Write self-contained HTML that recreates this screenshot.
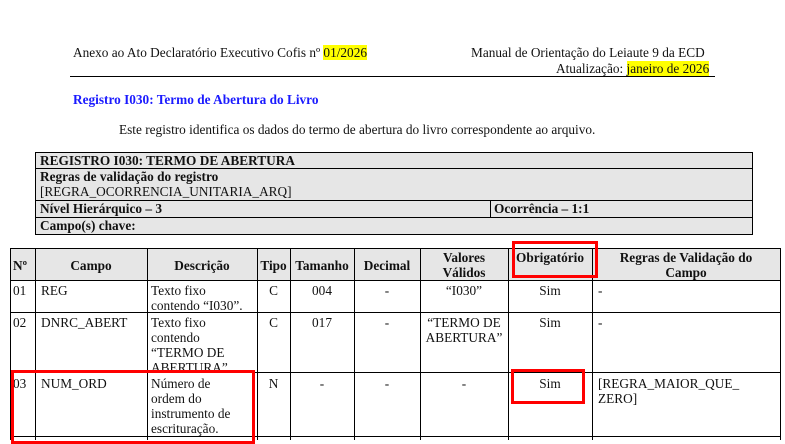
<!DOCTYPE html>
<html><head><meta charset="utf-8"><style>
body{margin:0;width:785px;height:440px;overflow:hidden;background:#fff;font-family:"Liberation Serif",serif;font-size:13.3px;color:#111;position:relative}
.a{position:absolute;white-space:nowrap;line-height:15px}
.h{background:#ffff00}
.l{position:absolute;background:#000}
.g{position:absolute;background:#e6e6e6}
.b{font-weight:bold}
.r{position:absolute;border:3px solid #ff0000}
.c{text-align:center}
</style></head><body>
<div class="a" style="left:73px;top:45px">Anexo ao Ato Declaratório Executivo Cofis nº <span class="h">01/2026</span></div>
<div class="a" style="left:471px;top:45px">Manual de Orientação do Leiaute 9 da ECD</div>
<div class="a" style="left:556px;top:61px">Atualização: <span class="h">janeiro de 2026</span></div>
<div class="l" style="left:70px;top:76px;width:645px;height:1px"></div>
<div class="a b" style="left:73px;top:92px;color:#1a1aff">Registro I030: Termo de Abertura do Livro</div>
<div class="a" style="left:119px;top:122px">Este registro identifica os dados do termo de abertura do livro correspondente ao arquivo.</div>

<div class="g" style="left:35px;top:152px;width:717px;height:82px"></div>
<div class="l" style="left:35px;top:152px;width:718px;height:1px"></div>
<div class="l" style="left:35px;top:168px;width:718px;height:1px"></div>
<div class="l" style="left:35px;top:200px;width:718px;height:1px"></div>
<div class="l" style="left:35px;top:217px;width:718px;height:1px"></div>
<div class="l" style="left:35px;top:234px;width:718px;height:1px"></div>
<div class="l" style="left:35px;top:152px;width:1px;height:83px"></div>
<div class="l" style="left:752px;top:152px;width:1px;height:83px"></div>
<div class="l" style="left:490px;top:200px;width:1px;height:17px"></div>
<div class="a b" style="left:40px;top:153px">REGISTRO I030: TERMO DE ABERTURA</div>
<div class="a b" style="left:40px;top:169px">Regras de validação do registro</div>
<div class="a" style="left:40px;top:184px">[REGRA_OCORRENCIA_UNITARIA_ARQ]</div>
<div class="a b" style="left:40px;top:201px">Nível Hierárquico – 3</div>
<div class="a b" style="left:494px;top:201px">Ocorrência – 1:1</div>
<div class="a b" style="left:40px;top:218px">Campo(s) chave:</div>

<div class="g" style="left:10px;top:248px;width:770px;height:32px"></div>
<div class="l" style="left:10px;top:248px;width:771px;height:1px"></div>
<div class="l" style="left:10px;top:280px;width:771px;height:1px"></div>
<div class="l" style="left:10px;top:312px;width:771px;height:1px"></div>
<div class="l" style="left:10px;top:372px;width:771px;height:1px"></div>
<div class="l" style="left:10px;top:436px;width:771px;height:1px"></div>
<div class="l" style="left:10px;top:248px;width:1px;height:192px"></div>
<div class="l" style="left:35px;top:248px;width:1px;height:192px"></div>
<div class="l" style="left:147px;top:248px;width:1px;height:192px"></div>
<div class="l" style="left:257px;top:248px;width:1px;height:192px"></div>
<div class="l" style="left:290px;top:248px;width:1px;height:192px"></div>
<div class="l" style="left:354px;top:248px;width:1px;height:192px"></div>
<div class="l" style="left:420px;top:248px;width:1px;height:192px"></div>
<div class="l" style="left:508px;top:248px;width:1px;height:192px"></div>
<div class="l" style="left:592px;top:248px;width:1px;height:192px"></div>
<div class="l" style="left:780px;top:248px;width:1px;height:192px"></div>

<div class="a b" style="left:13px;top:258px">Nº</div>
<div class="a b c" style="left:35px;top:258px;width:112px">Campo</div>
<div class="a b c" style="left:147px;top:258px;width:110px">Descrição</div>
<div class="a b c" style="left:257px;top:258px;width:33px">Tipo</div>
<div class="a b c" style="left:290px;top:258px;width:64px">Tamanho</div>
<div class="a b c" style="left:354px;top:258px;width:66px">Decimal</div>
<div class="a b c" style="left:420px;top:250px;width:88px">Valores<br>Válidos</div>
<div class="a b c" style="left:508px;top:250px;width:84px">Obrigatório</div>
<div class="a b c" style="left:592px;top:250px;width:188px">Regras de Validação do<br>Campo</div>

<div class="a" style="left:13px;top:283px">01</div>
<div class="a" style="left:41px;top:283px">REG</div>
<div class="a" style="left:151px;top:283px">Texto fixo<br>contendo “I030”.</div>
<div class="a c" style="left:257px;top:283px;width:33px">C</div>
<div class="a c" style="left:290px;top:283px;width:64px">004</div>
<div class="a c" style="left:354px;top:283px;width:66px">-</div>
<div class="a c" style="left:420px;top:283px;width:88px">“I030”</div>
<div class="a c" style="left:508px;top:283px;width:84px">Sim</div>
<div class="a" style="left:598px;top:283px">-</div>

<div class="a" style="left:13px;top:315px">02</div>
<div class="a" style="left:41px;top:315px">DNRC_ABERT</div>
<div class="a" style="left:151px;top:315px">Texto fixo<br>contendo<br>“TERMO DE<br>ABERTURA”.</div>
<div class="a c" style="left:257px;top:315px;width:33px">C</div>
<div class="a c" style="left:290px;top:315px;width:64px">017</div>
<div class="a c" style="left:354px;top:315px;width:66px">-</div>
<div class="a c" style="left:420px;top:315px;width:88px">“TERMO DE<br>ABERTURA”</div>
<div class="a c" style="left:508px;top:315px;width:84px">Sim</div>
<div class="a" style="left:598px;top:315px">-</div>

<div class="a" style="left:13px;top:376px">03</div>
<div class="a" style="left:41px;top:376px">NUM_ORD</div>
<div class="a" style="left:151px;top:376px">Número de<br>ordem do<br>instrumento de<br>escrituração.</div>
<div class="a c" style="left:257px;top:376px;width:33px">N</div>
<div class="a c" style="left:290px;top:376px;width:64px">-</div>
<div class="a c" style="left:354px;top:376px;width:66px">-</div>
<div class="a c" style="left:420px;top:376px;width:88px">-</div>
<div class="a c" style="left:508px;top:376px;width:84px">Sim</div>
<div class="a" style="left:598px;top:376px">[REGRA_MAIOR_QUE_<br>ZERO]</div>

<div class="r" style="left:512px;top:241px;width:80px;height:31px"></div>
<div class="r" style="left:11px;top:370px;width:238px;height:68px"></div>
<div class="r" style="left:511px;top:369px;width:68px;height:29px"></div>
</body></html>
